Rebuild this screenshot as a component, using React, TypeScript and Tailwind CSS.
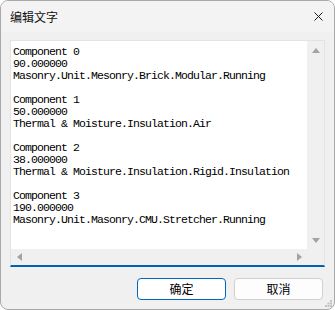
import * as React from 'react';

const lines = [
    'Component 0',
    '90.000000',
    'Masonry.Unit.Mesonry.Brick.Modular.Running',
    '',
    'Component 1',
    '50.000000',
    'Thermal & Moisture.Insulation.Air',
    '',
    'Component 2',
    '38.000000',
    'Thermal & Moisture.Insulation.Rigid.Insulation',
    '',
    'Component 3',
    '190.000000',
    'Masonry.Unit.Masonry.CMU.Stretcher.Running',
];

const cjk = "font-['Noto_Sans_CJK_SC','Noto_Sans',sans-serif]";

const Arrow = ({ dir }: { dir: 'up' | 'down' | 'left' | 'right' }) => {
    const pts = {
        up: '0,5 4,0 8,5',
        down: '0,0 8,0 4,5',
        left: '5,0 5,8 0,4',
        right: '0,0 0,8 5,4',
    }[dir];
    const vertical = dir === 'up' || dir === 'down';
    return (
        <svg width={vertical ? 8 : 5} height={vertical ? 5 : 8} viewBox={vertical ? '0 0 8 5' : '0 0 5 8'}>
            <polygon points={pts} fill="#a3a3a3" />
        </svg>
    );
};

export default function App() {
    return (
        <div className="relative w-[335px] h-[310px] bg-[#f0f0f0] border border-[#a9a9a9] rounded-[8px] overflow-hidden flex flex-col">
            <div className="h-[31px] shrink-0 bg-[#f3f3f3] flex items-center justify-between pl-[9px] pr-[11px]">
                <span className={`${cjk} text-[12px] text-[#111] leading-none`}>编辑文字</span>
                <svg width="9" height="9" viewBox="0 0 9 9" className="mb-[1px]">
                    <path d="M0.5 0.5 L8.5 8.5 M8.5 0.5 L0.5 8.5" stroke="#1a1a1a" strokeWidth="1" />
                </svg>
            </div>
            <div className="ml-[9px] mr-[9px] mt-[8px] h-[227px] flex flex-col border border-[#e3e3e3] border-b-2 border-b-[#0063b1]">
                <div className="flex flex-1 min-h-0">
                    <div className="flex-1 bg-white pl-[2px] pt-[5px] overflow-hidden">
                        {lines.map((l, i) => (
                            <div
                                key={i}
                                className="h-[12px] leading-[12px] text-[11.5px] tracking-[-0.9px] whitespace-pre text-black font-['Liberation_Mono',monospace]"
                            >
                                {l}
                            </div>
                        ))}
                    </div>
                    <div className="w-[17px] bg-[#f0f0f0] flex flex-col items-center justify-between pt-[7px] pb-[6px]">
                        <Arrow dir="up" />
                        <Arrow dir="down" />
                    </div>
                </div>
                <div className="h-[16px] shrink-0 flex">
                    <div className="flex-1 bg-[#f0f0f0] flex items-center justify-between pl-[6px] pr-[5px]">
                        <Arrow dir="left" />
                        <Arrow dir="right" />
                    </div>
                    <div className="w-[17px] bg-[#f0f0f0]" />
                </div>
            </div>
            <div className="flex justify-end gap-[8px] pr-[11px] mt-[11px]">
                <button className={`${cjk} w-[89px] h-[22px] bg-white border border-[#0067c0] rounded-[4px] text-[12px] text-black leading-none`}>
                    确定
                </button>
                <button className={`${cjk} w-[89px] h-[22px] bg-[#fdfdfd] border border-[#d0d0d0] rounded-[4px] text-[12px] text-black leading-none`}>
                    取消
                </button>
            </div>
            <svg className="absolute right-[2px] bottom-[2px]" width="7" height="7" viewBox="0 0 7 7">
                <rect x="5" y="0" width="2" height="2" fill="#c4c4c4" />
                <rect x="2.5" y="2.5" width="2" height="2" fill="#c4c4c4" />
                <rect x="5" y="2.5" width="2" height="2" fill="#c4c4c4" />
                <rect x="0" y="5" width="2" height="2" fill="#c4c4c4" />
                <rect x="2.5" y="5" width="2" height="2" fill="#c4c4c4" />
                <rect x="5" y="5" width="2" height="2" fill="#c4c4c4" />
            </svg>
        </div>
    );
}
